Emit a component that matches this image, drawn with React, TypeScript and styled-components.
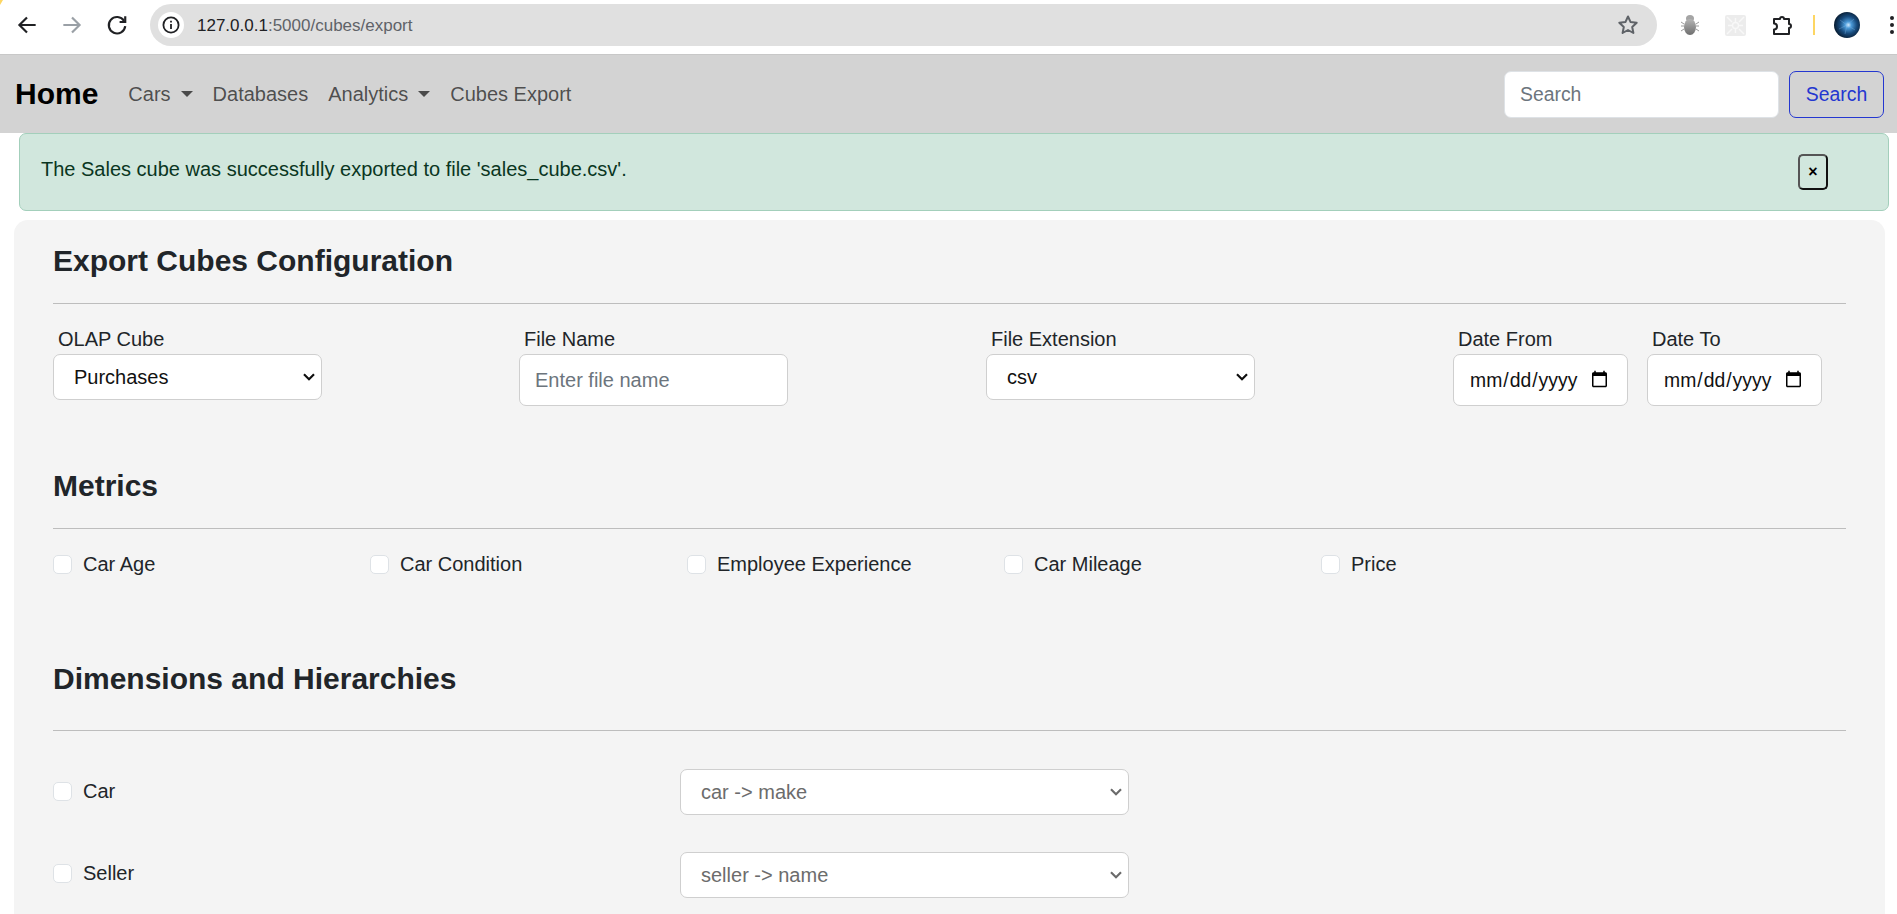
import React from "react";
import styled, { createGlobalStyle } from "styled-components";

const Global = createGlobalStyle`
  html, body { margin: 0; padding: 0; height: 914px; overflow: hidden; background: #fff; }
  body { font-family: "Liberation Sans", Arial, sans-serif; font-size: 20px; color: #212529; }
  * { box-sizing: border-box; }
`;

const Page = styled.div`
  width: 1897px;
  height: 914px;
  overflow: hidden;
  display: flex;
  flex-direction: column;
`;

const Chrome = styled.div`
  position: relative;
  height: 54px;
  flex: none;
  display: flex;
  align-items: center;
  background: #fff;
  padding: 0 0 4px 14px;
  &::before {
    content: "";
    position: absolute;
    left: 0;
    top: 0;
    width: 3px;
    height: 5px;
    background: #fdd663;
    clip-path: polygon(0 0, 100% 0, 0 100%);
  }
`;
const NavIcons = styled.div`
  display: flex;
  align-items: center;
  gap: 19px;
  margin-right: 20px;
`;
const AddressBar = styled.div`
  width: 1507px;
  flex: none;
  height: 42px;
  border-radius: 21px;
  background: #e0e0e0;
  display: flex;
  align-items: center;
  padding: 0 17px 0 8px;
`;
const InfoBadge = styled.span`
  width: 26px;
  height: 26px;
  border-radius: 50%;
  background: #fff;
  display: flex;
  align-items: center;
  justify-content: center;
  margin-right: 13px;
`;
const Url = styled.span`
  flex: 1;
  font-size: 17px;
  color: #5f6368;
  padding-top: 1px;
`;
const UrlHost = styled.span`
  color: #202124;
`;
const Extensions = styled.div`
  display: flex;
  flex: none;
  align-items: center;
  margin-left: 20px;
`;
const ExtSlot = styled.span<{ $w: number }>`
  width: ${(p) => p.$w}px;
  display: flex;
  align-items: center;
  justify-content: center;
`;
const Divider = styled.span`
  width: 2px;
  height: 20px;
  background: #fdd663;
`;

const Navbar = styled.nav`
  height: 79px;
  flex: none;
  background: #d3d3d3;
  border-top: 1px solid #c8c8c8;
  display: flex;
  align-items: center;
  padding: 0 13px 0 15px;
`;
const Brand = styled.a`
  font-size: 30px;
  font-weight: 700;
  color: #000;
  margin-right: 30px;
`;
const NavLink = styled.a`
  color: rgba(0, 0, 0, 0.65);
  font-size: 20px;
  margin-right: 20px;
  display: flex;
  align-items: center;
`;
const Caret = styled.span`
  display: inline-block;
  margin-left: 10px;
  border-top: 6.5px solid rgba(0, 0, 0, 0.65);
  border-left: 6.5px solid transparent;
  border-right: 6.5px solid transparent;
`;
const SearchForm = styled.form`
  margin-left: auto;
  display: flex;
  gap: 10px;
`;
const SearchInput = styled.input`
  width: 275px;
  height: 47px;
  border: 1px solid #dee2e6;
  border-radius: 7px;
  background: #fff;
  padding: 0 15px;
  font: 19.36px "Liberation Sans", Arial, sans-serif;
  &::placeholder { color: #6c757d; opacity: 1; }
`;
const SearchButton = styled.button`
  width: 95px;
  height: 47px;
  border: 1px solid #2437d0;
  border-radius: 7px;
  background: transparent;
  color: #2437d0;
  font: 19.36px "Liberation Sans", Arial, sans-serif;
  padding: 0;
`;

const Alert = styled.div`
  flex: none;
  height: 78px;
  margin: 0 8px 9px 19px;
  background: #d1e7dd;
  border: 1px solid #a3cfbb;
  border-radius: 7px;
  color: #0a3622;
  display: flex;
  align-items: flex-start;
  justify-content: space-between;
  padding: 24px 60px 0 21px;
  line-height: 23px;
`;
const CloseButton = styled.button`
  width: 30px;
  height: 36px;
  margin-top: -4px;
  background: transparent;
  border: 2px solid #111;
  border-top-color: #555;
  border-left-color: #555;
  border-radius: 5px;
  padding: 0;
  font: 700 16px "Liberation Sans", Arial, sans-serif;
  color: #000;
  line-height: 1;
`;

const Panel = styled.main`
  flex: 1;
  margin: 0 12px 0 14px;
  background: #f4f4f4;
  border-radius: 14px 14px 0 0;
  padding: 23px 39px 0;
`;
const Title = styled.h4`
  margin: 0;
  font-size: 30px;
  font-weight: 700;
  line-height: 35px;
  color: #212529;
`;
const SectionTitle = styled(Title)<{ $top: number }>`
  margin-top: ${(p) => p.$top}px;
`;
const SectionRule = styled.hr<{ $top: number }>`
  margin: ${(p) => p.$top}px 0 0;
  border: 0;
  border-top: 1px solid #bdbdbd;
`;
const ConfigRow = styled.div`
  display: grid;
  grid-template-columns: 466px 467px 467px 194px 180px;
  margin-top: 24px;
  height: 83px;
`;
const Field = styled.div`
  display: flex;
  flex-direction: column;
  align-items: flex-start;
`;
const FieldLabel = styled.label`
  font-size: 20px;
  line-height: 23px;
  margin: 0 0 3px 5px;
`;
const chevron = (color: string) =>
  `url("data:image/svg+xml,%3Csvg xmlns='http://www.w3.org/2000/svg' width='12' height='8' viewBox='0 0 12 8'%3E%3Cpath d='M1 1.2l5 5 5-5' fill='none' stroke='${color}' stroke-width='2.2'/%3E%3C/svg%3E")`;
const Dropdown = styled.select<{ $w: number; $muted?: boolean }>`
  appearance: none;
  width: ${(p) => p.$w}px;
  height: 46px;
  background: #fff ${(p) => chevron(p.$muted ? "%236c6c6c" : "%23111")} no-repeat right 6px center;
  border: 1px solid #cfcfcf;
  border-radius: 7px;
  padding: 0 0 0 20px;
  font: 20px "Liberation Sans", Arial, sans-serif;
  color: ${(p) => (p.$muted ? "#6c6c6c" : "#111")};
`;
const TextField = styled.input<{ $w: number; $size: number }>`
  width: ${(p) => p.$w}px;
  height: 52px;
  background: #fff;
  border: 1px solid #cfcfcf;
  border-radius: 7px;
  padding: 0 16px 0 15px;
  font: ${(p) => p.$size}px "Liberation Sans", Arial, sans-serif;
  color: #111;
  &::placeholder { color: #6c757d; opacity: 1; }
`;
const CheckboxBox = styled.span`
  width: 19px;
  height: 19px;
  flex: none;
  display: inline-block;
  background: #fff;
  border: 1px solid #dee2e6;
  border-radius: 5px;
  margin-right: 11px;
`;
const MetricsRow = styled.div`
  display: grid;
  grid-template-columns: repeat(5, 317px);
  margin-top: 24px;
`;
const Check = styled.label<{ $lift?: number }>`
  display: flex;
  align-items: center;
  font-size: 20px;
  line-height: 23px;
  margin-bottom: ${(p) => p.$lift ?? 0}px;
`;
const HierarchyRow = styled.div<{ $top: number }>`
  display: grid;
  grid-template-columns: 627px 449px;
  align-items: center;
  margin-top: ${(p) => p.$top}px;
`;

const Arrow = ({ dir, color }: { dir: "l" | "r"; color: string }) => (
  <svg width="26" height="26" viewBox="0 0 24 24" fill="none" stroke={color} strokeWidth="2">
    {dir === "l" ? <path d="M20 12H5M12 5l-7 7 7 7" /> : <path d="M4 12h15M12 5l7 7-7 7" />}
  </svg>
);

const Reload = () => (
  <svg width="26" height="26" viewBox="0 0 24 24" fill="none" stroke="#202124" strokeWidth="2">
    <path d="M18.5 8.2A7.6 7.6 0 1 0 19.6 13" />
    <path d="M19.6 4v5.2h-5.2" />
  </svg>
);

const Info = () => (
  <svg width="18" height="18" viewBox="0 0 18 18" fill="none" stroke="#202124" strokeWidth="1.8">
    <circle cx="9" cy="9" r="7.6" />
    <path d="M9 8v5M9 4.8v1.8" />
  </svg>
);

const Star = () => (
  <svg width="24" height="24" viewBox="0 0 24 24" fill="none" stroke="#5f6368" strokeWidth="2" strokeLinejoin="round">
    <path d="M12 3.5l2.6 5.6 6.1.7-4.5 4.2 1.2 6L12 17l-5.4 3 1.2-6-4.5-4.2 6.1-.7z" />
  </svg>
);

const Bug = () => (
  <svg width="20" height="22" viewBox="0 0 20 22" fill="none">
    <defs>
      <linearGradient id="bugfill" x1="0" y1="0" x2="0" y2="1">
        <stop offset="0" stopColor="#b5b5b5" />
        <stop offset="1" stopColor="#6e6e6e" />
      </linearGradient>
    </defs>
    <path d="M1 8l3 2M1 12h3M1 17l3-2M19 8l-3 2M19 12h-3M19 17l-3-2" stroke="#9a9a9a" strokeWidth="1" />
    <ellipse cx="10" cy="4.5" rx="4" ry="3.5" fill="#a5a5a5" />
    <ellipse cx="10" cy="13" rx="6" ry="8" fill="url(#bugfill)" />
  </svg>
);

const Pattern = () => (
  <svg width="21" height="21" viewBox="0 0 21 21" fill="none">
    <rect width="21" height="21" rx="2" fill="#ececec" />
    <path d="M2 2l5 5M19 2l-5 5M2 19l5-5M19 19l-5-5M10.5 3v4M10.5 14v4M3 10.5h4M14 10.5h4" stroke="#f8f8f8" strokeWidth="1.4" />
    <circle cx="10.5" cy="10.5" r="3" stroke="#f8f8f8" strokeWidth="1.4" />
  </svg>
);

const Puzzle = () => (
  <svg width="24" height="24" viewBox="0 0 24 24" fill="none" stroke="#202124" strokeWidth="2" strokeLinejoin="round">
    <path d="M4 6h6a2 2 0 0 1 4 0h5v5a2 2 0 0 1 0 4v6H4v-4.5a3 3 0 0 0 0-6z" />
  </svg>
);

const Avatar = () => (
  <svg width="26" height="26" viewBox="0 0 26 26">
    <defs>
      <radialGradient id="orb" cx="0.55" cy="0.5" r="0.55">
        <stop offset="0" stopColor="#d8eeff" />
        <stop offset="0.22" stopColor="#4b9ad8" />
        <stop offset="0.6" stopColor="#174a7c" />
        <stop offset="1" stopColor="#071a2e" />
      </radialGradient>
    </defs>
    <circle cx="13" cy="13" r="13" fill="url(#orb)" />
    <path d="M6 8l7 5 7-6M5 17l8-4 8 5M13 13l-2 9" stroke="#8fc4ee" strokeWidth="0.5" opacity="0.6" fill="none" />
  </svg>
);

const Dots = () => (
  <svg width="6" height="20" viewBox="0 0 6 20" fill="#202124">
    <circle cx="3" cy="3" r="2" />
    <circle cx="3" cy="10" r="2" />
    <circle cx="3" cy="17" r="2" />
  </svg>
);

const DateField = ({ label }: { label: string }) => (
  <Field>
    <FieldLabel>{label}</FieldLabel>
    <TextField $w={175} $size={19.36} type="date" />
  </Field>
);

const Hierarchy = ({ top, label, value, lift }: { top: number; label: string; value: string; lift: number }) => (
  <HierarchyRow $top={top}>
    <Check $lift={lift}>
      <CheckboxBox />
      {label}
    </Check>
    <Dropdown $w={449} $muted defaultValue={value}>
      <option>{value}</option>
    </Dropdown>
  </HierarchyRow>
);

export default function App() {
  return (
    <Page>
      <Global />
      <Chrome>
        <NavIcons>
          <Arrow dir="l" color="#202124" />
          <Arrow dir="r" color="#9aa0a6" />
          <Reload />
        </NavIcons>
        <AddressBar>
          <InfoBadge>
            <Info />
          </InfoBadge>
          <Url>
            <UrlHost>127.0.0.1</UrlHost>:5000/cubes/export
          </Url>
          <Star />
        </AddressBar>
        <Extensions>
          <ExtSlot $w={26}><Bug /></ExtSlot>
          <ExtSlot $w={64}><Pattern /></ExtSlot>
          <ExtSlot $w={30}><Puzzle /></ExtSlot>
          <ExtSlot $w={34}><Divider /></ExtSlot>
          <ExtSlot $w={32}><Avatar /></ExtSlot>
          <ExtSlot $w={58}><Dots /></ExtSlot>
        </Extensions>
      </Chrome>
      <Navbar>
        <Brand>Home</Brand>
        <NavLink>Cars<Caret /></NavLink>
        <NavLink>Databases</NavLink>
        <NavLink>Analytics<Caret /></NavLink>
        <NavLink>Cubes Export</NavLink>
        <SearchForm>
          <SearchInput placeholder="Search" />
          <SearchButton type="button">Search</SearchButton>
        </SearchForm>
      </Navbar>
      <Alert>
        <span>The Sales cube was successfully exported to file 'sales_cube.csv'.</span>
        <CloseButton type="button">×</CloseButton>
      </Alert>
      <Panel>
        <Title>Export Cubes Configuration</Title>
        <SectionRule $top={25} />
        <ConfigRow>
          <Field>
            <FieldLabel>OLAP Cube</FieldLabel>
            <Dropdown $w={269}><option>Purchases</option></Dropdown>
          </Field>
          <Field>
            <FieldLabel>File Name</FieldLabel>
            <TextField $w={269} $size={20} placeholder="Enter file name" />
          </Field>
          <Field>
            <FieldLabel>File Extension</FieldLabel>
            <Dropdown $w={269}><option>csv</option></Dropdown>
          </Field>
          <DateField label="Date From" />
          <DateField label="Date To" />
        </ConfigRow>
        <SectionTitle $top={57}>Metrics</SectionTitle>
        <SectionRule $top={25} />
        <MetricsRow>
          {["Car Age", "Car Condition", "Employee Experience", "Car Mileage", "Price"].map((m) => (
            <Check key={m}>
              <CheckboxBox />
              {m}
            </Check>
          ))}
        </MetricsRow>
        <SectionTitle $top={85}>Dimensions and Hierarchies</SectionTitle>
        <SectionRule $top={34} />
        <Hierarchy top={38} label="Car" value="car -> make" lift={2} />
        <Hierarchy top={37} label="Seller" value="seller -> name" lift={4} />
      </Panel>
    </Page>
  );
}
